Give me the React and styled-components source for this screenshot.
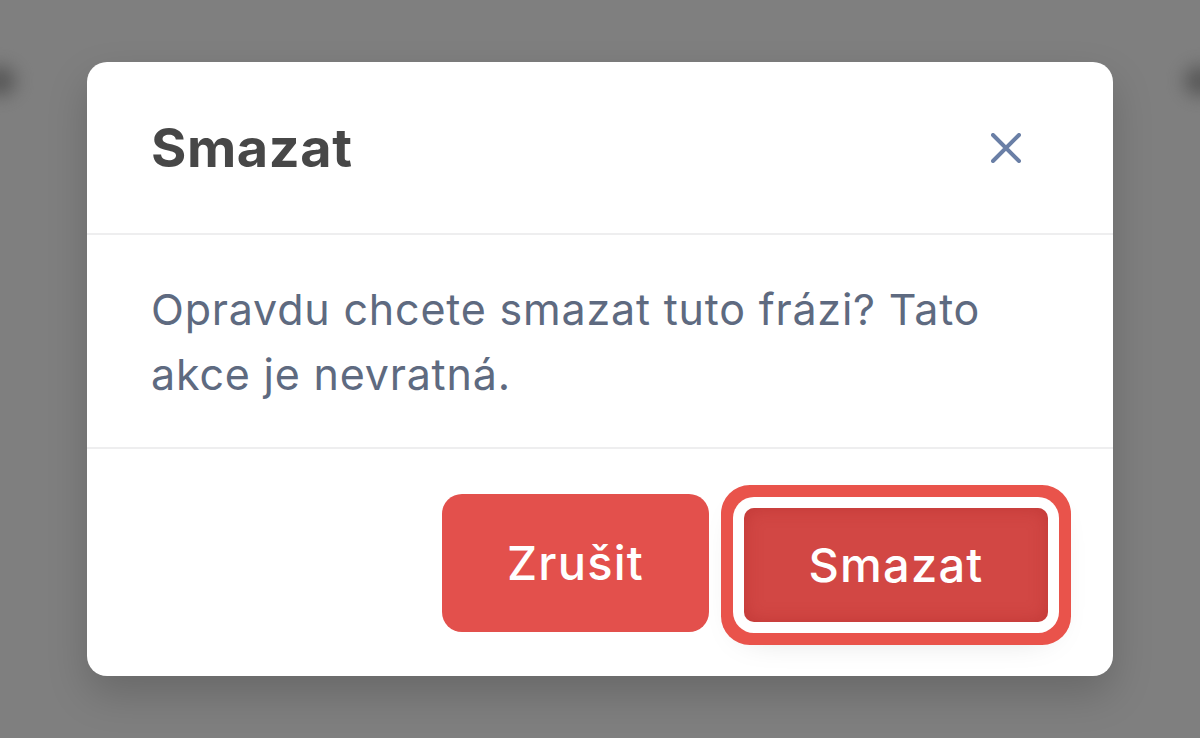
import React from 'react';
import styled, { createGlobalStyle } from 'styled-components';

const GlobalStyle = createGlobalStyle`
  html, body {
    margin: 0;
    padding: 0;
    width: 100%;
    height: 100%;
    overflow: hidden;
  }
  body {
    font-family: Inter, "Noto Sans", sans-serif;
    background: #7f7f7f;
  }
`;

const Screen = styled.div`
  position: relative;
  width: 1200px;
  height: 738px;
  background: #7f7f7f;
  overflow: hidden;
`;

const Backdrop = styled.div`
  position: absolute;
  inset: 0;
  display: flex;
  justify-content: space-between;
  align-items: flex-start;
  padding-top: 66px;
`;

const Blob = styled.span`
  display: block;
  width: 34px;
  height: 30px;
  border-radius: 50%;
  background: #4d4d4d;
  filter: blur(9px);
  margin: 0 ${props => props.side === 'left' ? '0 0 -18px' : '-18px 0 0'};
  opacity: 0.8;
`;

const Overlay = styled.div`
  position: absolute;
  inset: 0;
  display: flex;
  justify-content: center;
  padding-top: 62px;
`;

const Modal = styled.div`
  width: 1026px;
  height: 614px;
  background: #fff;
  border-radius: 20px;
  box-shadow: 0 18px 40px rgba(0, 0, 0, 0.18);
  display: flex;
  flex-direction: column;
  overflow: hidden;
`;

const Header = styled.div`
  height: 171px;
  display: flex;
  align-items: center;
  justify-content: space-between;
  padding: 0 92px 0 64px;
  border-bottom: 2px solid #eeeeef;
`;

const Title = styled.h2`
  margin: 0;
  font-size: 54px;
  font-weight: 650;
  color: #474747;
  letter-spacing: 0.6px;
`;

const CloseButton = styled.button`
  width: 30px;
  height: 30px;
  padding: 0;
  border: 0;
  background: none;
  display: flex;
  cursor: pointer;
`;

const Body = styled.div`
  height: 214px;
  box-sizing: border-box;
  padding: 42px 64px;
  border-bottom: 2px solid #eeeeef;
`;

const Message = styled.p`
  margin: 0;
  font-size: 43px;
  line-height: 65px;
  letter-spacing: 0.8px;
  color: #5e6a80;
  font-weight: 400;
`;

const Footer = styled.div`
  flex: 1;
  display: flex;
  align-items: center;
  justify-content: flex-end;
  gap: 35px;
  padding: 0 65px 0 64px;
`;

const Button = styled.button`
  border: 0;
  border-radius: ${props => props.focused ? '10px' : '20px'};
  width: ${props => props.focused ? '304px' : '267px'};
  height: ${props => props.focused ? '114px' : '138px'};
  margin-top: ${props => props.focused ? '4px' : '0'};
  font-family: Inter, "Noto Sans", sans-serif;
  font-size: 47px;
  font-weight: 500;
  letter-spacing: 1.2px;
  color: #fff;
  cursor: pointer;
  background: ${props => props.focused ? '#d24744' : '#e3504c'};
  box-shadow: ${props => props.focused
    ? 'inset 0 0 18px rgba(160, 30, 30, 0.35), 0 0 0 11px #fff, 0 0 0 23px #e9534b, 0 10px 36px rgba(0, 0, 0, 0.22)'
    : 'none'};
`;

function CloseIcon() {
  return (
    <svg width="30" height="30" viewBox="0 0 30 30" fill="none">
      <path d="M2 2L28 28M28 2L2 28" stroke="#6a7fa6" strokeWidth="4" strokeLinecap="round" />
    </svg>
  );
}

export default function App() {
  return (
    <Screen>
      <GlobalStyle />
      <Backdrop>
        <Blob side="left" />
        <Blob side="right" />
      </Backdrop>
      <Overlay>
        <Modal role="dialog" aria-label="Smazat">
          <Header>
            <Title>Smazat</Title>
            <CloseButton aria-label="Zavřít">
              <CloseIcon />
            </CloseButton>
          </Header>
          <Body>
            <Message>Opravdu chcete smazat tuto frázi? Tato akce je nevratná.</Message>
          </Body>
          <Footer>
            <Button>Zrušit</Button>
            <Button focused>Smazat</Button>
          </Footer>
        </Modal>
      </Overlay>
    </Screen>
  );
}
